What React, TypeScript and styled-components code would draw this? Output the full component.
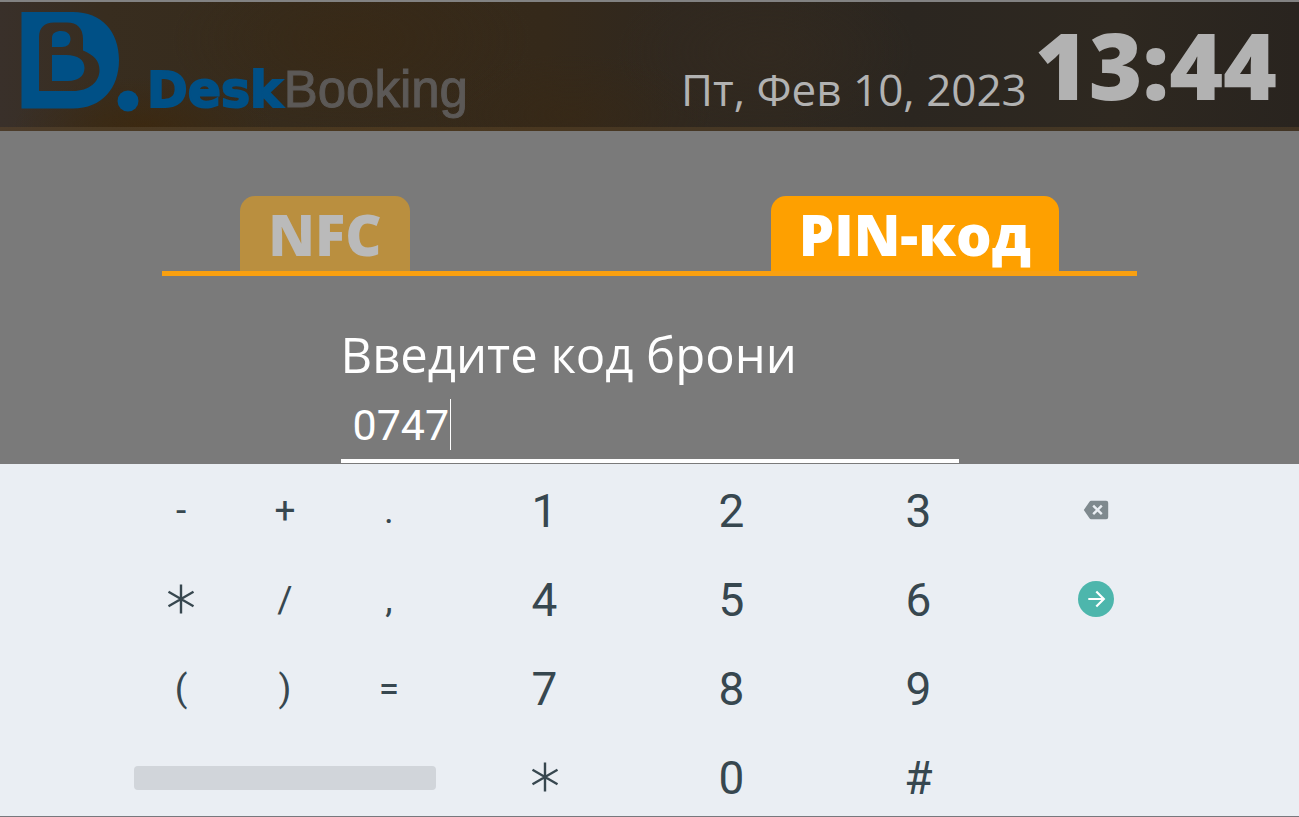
import React, { useState } from "react";
import styled, { createGlobalStyle } from "styled-components";

const GlobalStyle = createGlobalStyle`
  * { box-sizing: border-box; }
  body { margin: 0; background: #7a7a7a; font-family: "Open Sans", sans-serif; }
  button, input { font: inherit; color: inherit; border: 0; padding: 0; margin: 0; background: none; }
  button { cursor: pointer; }
`;

const Page = styled.div`
  display: flex;
  flex-direction: column;
  min-height: 100vh;
  border-top: 2px solid #828282;
  border-bottom: 1px solid #77787d;
`;

const Header = styled.header`
  display: flex;
  justify-content: space-between;
  align-items: flex-start;
  height: 129px;
  padding: 0 22px 0 20px;
  border-bottom: 4px solid rgba(112, 84, 46, 0.35);
  background:
    radial-gradient(ellipse 130px 50px at 11% 100%, rgba(62, 38, 8, 0.6), transparent),
    radial-gradient(ellipse 180px 90px at 27% 30%, rgba(58, 40, 18, 0.5), transparent),
    radial-gradient(ellipse 140px 60px at 44% 90%, rgba(56, 40, 20, 0.5), transparent),
    radial-gradient(ellipse 150px 80px at 59% 40%, rgba(52, 42, 32, 0.5), transparent),
    linear-gradient(90deg, #39302a 0%, #382d1f 8%, #362b1c 22%, #35291a 42%, #30281f 52%, #2f281f 60%, #2b2620 70%, #2e2820 86%, #29241f 100%);
`;

const Brand = styled.a`
  display: flex;
  align-items: flex-start;
  color: #005086;
  text-decoration: none;
`;

const Mark = styled.svg`
  width: 120px;
  height: 104px;
  margin-top: 6px;
`;

const Wordmark = styled.span`
  display: flex;
  align-items: baseline;
  gap: 1px;
  margin: 58px 0 0 7px;
  line-height: 60px;
`;

const WordStrong = styled.span`
  font: 700 49px/60px "DejaVu Sans", sans-serif;
  -webkit-text-stroke: 2px currentColor;
`;

const WordLight = styled.span`
  font: 400 51px/60px "Liberation Sans", Arial, sans-serif;
  color: #5c5957;
  -webkit-text-stroke: 1px currentColor;
`;

const Clock = styled.div`
  display: flex;
  align-items: flex-start;
  gap: 8px;
  color: #b2b2b2;
  white-space: nowrap;
`;

const DateText = styled.time`
  margin-top: 57px;
  font-size: 44px;
  line-height: 60px;
`;

const TimeText = styled.time`
  margin-top: 13px;
  font-size: 92px;
  font-weight: 800;
  line-height: 100px;
`;

const Main = styled.main`
  display: flex;
  flex: 1;
  flex-direction: column;
  align-items: center;
  padding-top: 65px;
`;

const TabList = styled.div`
  display: flex;
  justify-content: space-between;
  width: 75%;
  padding: 0 6%;
  border-bottom: 5px solid #f9a010;
`;

const Tab = styled.button<{ $active: boolean }>`
  height: 75px;
  padding: 0 28px;
  border-radius: 15px 15px 0 0;
  background: ${(p) => (p.$active ? "#fea000" : "#ba8f3f")};
  color: ${(p) => (p.$active ? "#ffffff" : "#bababa")};
  font-size: 56px;
  font-weight: 800;
  line-height: 74px;
`;

const Form = styled.form`
  display: flex;
  flex-direction: column;
  width: 48%;
  max-width: 618px;
  margin-top: 46px;
  color: #ffffff;
`;

const Label = styled.label`
  font-size: 49px;
  line-height: 64px;
  white-space: nowrap;
`;

const Field = styled.div`
  display: flex;
  align-items: center;
  height: 77px;
  padding: 4px 12px 0;
  border-bottom: 4px solid #ffffff;
`;

const PinInput = styled.input`
  width: 97px;
  height: 56px;
  outline: 0;
  font-family: Roboto, sans-serif;
  font-size: 43px;
`;

const Caret = styled.span`
  width: 1px;
  height: 51px;
  background: #ffffff;
`;

const Keypad = styled.section`
  display: flex;
  gap: 10px;
  padding: 19px 129px 10px;
  background: #eaeef3;
  color: #37474f;
  font-family: Roboto, sans-serif;
`;

const KeyGroup = styled.div<{ $columns: number; $grow: number }>`
  display: grid;
  flex: ${(p) => p.$grow} 1 0;
  grid-template-columns: repeat(${(p) => p.$columns}, 1fr);
  grid-auto-rows: 56px;
  row-gap: 33px;
`;

const Key = styled.button<{ $small?: boolean }>`
  display: flex;
  align-items: center;
  justify-content: center;
  font-size: ${(p) => (p.$small ? 37 : 46)}px;
  line-height: 56px;

  svg {
    margin-bottom: 2px;
  }
`;

const SpaceKey = styled.button`
  grid-column: 1 / -1;
  align-self: center;
  height: 24px;
  margin: 0 5px;
  border-radius: 4px;
  background: #d1d5da;
`;

const Asterisk = () => (
  <svg width="28" height="30" viewBox="0 0 28 30" fill="none" stroke="currentColor" strokeWidth="2.4" aria-hidden="true">
    <path d="M14 .5v29M1.500 7.800l25 14.400M26.500 7.800l-25 14.400" />
  </svg>
);

const Backspace = () => (
  <svg width="26" height="20" viewBox="0 0 26 20" aria-hidden="true">
    <path d="M8.200 .8h15a2 2 0 0 1 2 2v14.400a2 2 0 0 1-2 2h-15a2 2 0 0 1-1.700-.9L.8 10l5.700-8.300A2 2 0 0 1 8.200 .8z" fill="#7f898e" />
    <path d="M10.200 5.600l8.600 8.600M18.800 5.600l-8.600 8.600" stroke="#eaeef3" strokeWidth="2.4" />
  </svg>
);

const Enter = () => (
  <svg width="36" height="36" viewBox="0 0 36 36" aria-hidden="true">
    <circle cx="18" cy="18" r="18" fill="#4db6ac" />
    <path d="M10.300 18h15.200M18.300 10.500l7.500 7.500-7.500 7.500" fill="none" stroke="#ffffff" strokeWidth="2.2" />
  </svg>
);

const symbols = ["-", "+", ".", "*", "/", ",", "(", ")", "="];
const digits = ["1", "2", "3", "4", "5", "6", "7", "8", "9", "*", "0", "#"];
const tabs = ["NFC", "PIN-код"];

export default function App() {
  const [active, setActive] = useState("PIN-код");
  const [pin, setPin] = useState("0747");
  const add = (ch: string) => setPin((value) => value + ch);

  return (
    <>
      <GlobalStyle />
      <Page>
        <Header>
          <Brand href="#">
            <Mark viewBox="0 0 120 104" aria-hidden="true">
              <path
                fillRule="evenodd"
                fill="currentColor"
                d="M1.500 4H53C82 4 99 24 99 52S82 100.500 53 100.500H1.500zM34 14.500C24 14.500 19 20 19 29V83H53C69 83 79.500 74 79.500 62C79.500 53 74 47 63 42.500V31C63 20 57 14.500 47 14.500zM32 39V30C32 25 36 23 41 23C47 23 50.500 26 50.500 31C50.500 36 47 39 42 39zM32 47H46C58 47 64.500 52 64.500 60C64.500 68 58 73 48 73H32z"
              />
              <circle cx="108" cy="93" r="10.500" fill="currentColor" />
            </Mark>
            <Wordmark>
              <WordStrong>Desk</WordStrong>
              <WordLight>Booking</WordLight>
            </Wordmark>
          </Brand>
          <Clock>
            <DateText dateTime="2023-02-10">Пт, Фев 10, 2023</DateText>
            <TimeText dateTime="13:44">13:44</TimeText>
          </Clock>
        </Header>
        <Main>
          <TabList role="tablist">
            {tabs.map((name) => (
              <Tab key={name} type="button" role="tab" aria-selected={active === name} $active={active === name} onClick={() => setActive(name)}>
                {name}
              </Tab>
            ))}
          </TabList>
          <Form>
            <Label htmlFor="pin">Введите код брони</Label>
            <Field>
              <PinInput id="pin" inputMode="numeric" value={pin} onChange={(e) => setPin(e.target.value)} />
              <Caret />
            </Field>
          </Form>
        </Main>
        <Keypad aria-label="Клавиатура">
          <KeyGroup $columns={3} $grow={312}>
            {symbols.map((ch) => (
              <Key key={ch} type="button" $small aria-label={ch} onClick={() => add(ch)}>
                {ch === "*" ? <Asterisk /> : ch}
              </Key>
            ))}
            <SpaceKey type="button" aria-label="Пробел" onClick={() => add(" ")} />
          </KeyGroup>
          <KeyGroup $columns={3} $grow={561}>
            {digits.map((ch) => (
              <Key key={ch} type="button" aria-label={ch} onClick={() => add(ch)}>
                {ch === "*" ? <Asterisk /> : ch}
              </Key>
            ))}
          </KeyGroup>
          <KeyGroup $columns={1} $grow={148}>
            <Key type="button" aria-label="Удалить" onClick={() => setPin((value) => value.slice(0, -1))}>
              <Backspace />
            </Key>
            <Key type="button" aria-label="Далее">
              <Enter />
            </Key>
          </KeyGroup>
        </Keypad>
      </Page>
    </>
  );
}
